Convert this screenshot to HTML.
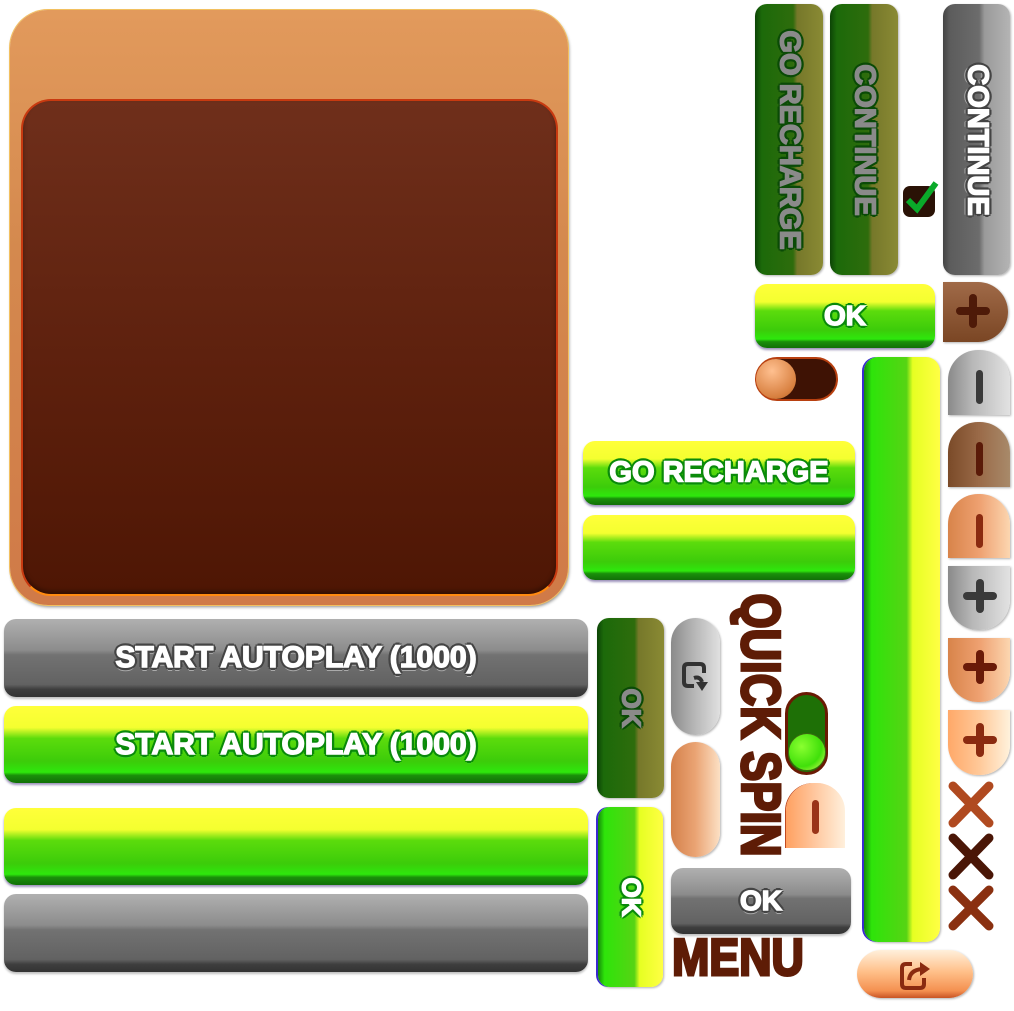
<!DOCTYPE html>
<html><head><meta charset="utf-8"><style>
*{margin:0;padding:0;box-sizing:border-box}
html,body{width:1014px;height:1011px;background:#fff;overflow:hidden;position:relative;font-family:"Liberation Sans",sans-serif;font-weight:bold}
.a{position:absolute}
.hg{background:linear-gradient(#ffff3a 0%,#f4ff30 28%,#5cdc0c 42%,#3ccc0a 72%,#2ee80c 86%,#1a900a 90%,#127008 100%);border-radius:12px;box-shadow:0 2px 2px rgba(60,40,120,.5)}
.hgr{background:linear-gradient(#b0b0b0 0%,#8c8c8c 40%,#727272 46%,#626262 84%,#3e3e3e 90%,#333 100%);border-radius:12px;box-shadow:0 2px 2px rgba(0,0,0,.25)}
.vd{background:linear-gradient(90deg,#0c4406 0%,#1c6a0a 10%,#2e6c0c 56%,#76782a 62%,#8a8a34 100%);border-radius:12px;box-shadow:1px 1px 2px rgba(0,0,0,.3)}
.vg{background:linear-gradient(90deg,#168a0a 0%,#2ee40a 10%,#56d414 56%,#e6ff22 64%,#ffff44 100%);border-radius:12px;box-shadow:-2px 0 0 #3a2ad0,1px 1px 2px rgba(0,0,0,.3)}
.vgr{background:linear-gradient(90deg,#444 0%,#5c5c5c 10%,#6c6c6c 54%,#9a9a9a 62%,#b4b4b4 100%);border-radius:12px;box-shadow:1px 1px 2px rgba(0,0,0,.3)}
.t{position:absolute;left:50%;top:50%;white-space:nowrap;color:#fff}
.go{-webkit-text-stroke:1.5px #fff;text-shadow:3px 0 #0a8a0a,-3px 0 #0a8a0a,0 3px #0a8a0a,0 -3px #0a8a0a,2px 2px #0a8a0a,-2px -2px #0a8a0a,2px -2px #0a8a0a,-2px 2px #0a8a0a,0 4px #3cd020}
.gro{-webkit-text-stroke:1.5px #fff;text-shadow:3px 0 #444,-3px 0 #444,0 3px #444,0 -3px #444,2px 2px #444,-2px -2px #444,2px -2px #444,-2px 2px #444,0 4px #aaa}
.dgo{color:#8a8a8a;-webkit-text-stroke:1.5px #8a8a8a;text-shadow:3px 0 #0a4a06,-3px 0 #0a4a06,0 3px #0a4a06,0 -3px #0a4a06,2px 2px #0a4a06,-2px -2px #0a4a06,2px -2px #0a4a06,-2px 2px #0a4a06}
.bar{position:absolute;background:#4a2a24;border-radius:4px}
</style></head><body>

<div class="a" style="left:10px;top:10px;width:558px;height:595px;border-radius:38px;background:linear-gradient(#e29a5c 0%,#d4894e 40%,#d07a48 100%);box-shadow:0 0 0 1px #f2c060,1px 2px 3px rgba(0,0,0,.45)"></div>
<div class="a" style="left:21px;top:99px;width:537px;height:497px;border-radius:30px;background:linear-gradient(#6f2f1b 0%,#5d200d 55%,#4e1604 100%);border:2px solid #c83a10;border-bottom-color:#ff8a10;box-shadow:inset 0 -3px 4px rgba(0,0,0,.35)"></div>

<div class="a vd" style="left:755px;top:4px;width:68px;height:271px"><div class="t dgo" style="font-size:29px;transform:translate(-50%,-50%) rotate(90deg)">GO RECHARGE</div></div>
<div class="a vd" style="left:830px;top:4px;width:68px;height:271px"><div class="t dgo" style="font-size:29px;transform:translate(-50%,-50%) rotate(90deg)">CONTINUE</div></div>
<div class="a vgr" style="left:943px;top:4px;width:67px;height:271px"><div class="t gro" style="font-size:29px;transform:translate(-50%,-50%) rotate(90deg)">CONTINUE</div></div>
<div class="a" style="left:903px;top:186px;width:32px;height:31px;background:#2a1206;border-radius:7px"></div>
<svg class="a" style="left:903px;top:178px" width="36" height="40"><path d="M5 22 L14 31 L33 5" stroke="#0aaa2a" stroke-width="6" fill="none"/></svg>

<div class="a hg" style="left:755px;top:284px;width:180px;height:64px"><div class="t go" style="font-size:28px;transform:translate(-50%,-50%)">OK</div></div>
<div class="a" style="left:943px;top:282px;width:65px;height:60px;border-radius:0 30px 30px 0;background:linear-gradient(#a06a48,#7a4624);box-shadow:1px 1px 2px rgba(0,0,0,.3)"></div>
<div class="bar" style="left:956px;top:307px;width:34px;height:8px;background:#4e1a08"></div>
<div class="bar" style="left:969px;top:294px;width:8px;height:34px;background:#4e1a08"></div>
<div class="a" style="left:755px;top:357px;width:83px;height:44px;border-radius:22px;background:#3e1204;border:2px solid #b84010"></div>
<div class="a" style="left:756px;top:359px;width:40px;height:40px;border-radius:50%;background:radial-gradient(circle at 40% 30%,#ffc090,#d88040 70%,#b06020)"></div>

<div class="a vg" style="left:864px;top:357px;width:76px;height:585px;border-radius:14px"></div>

<div class="a" style="left:948px;top:350px;width:62px;height:65px;border-radius:30px 30px 0 0;background:linear-gradient(90deg,#8a8a8a,#b8b8b8 40%,#e2e2e2);box-shadow:1px 1px 2px rgba(0,0,0,.3)"></div>
<div class="bar" style="left:976px;top:370px;width:7px;height:34px;background:#3a3a3a"></div>
<div class="a" style="left:948px;top:422px;width:62px;height:65px;border-radius:30px 30px 0 0;background:linear-gradient(90deg,#7a4a28,#9a6a48 50%,#a88a6a);box-shadow:1px 1px 2px rgba(0,0,0,.3)"></div>
<div class="bar" style="left:976px;top:442px;width:7px;height:34px;background:#5a1a08"></div>
<div class="a" style="left:948px;top:494px;width:62px;height:64px;border-radius:30px 30px 0 0;background:linear-gradient(90deg,#d8844a,#eea070 50%,#fcd6b0);box-shadow:1px 1px 2px rgba(0,0,0,.3)"></div>
<div class="bar" style="left:976px;top:514px;width:7px;height:34px;background:#8a2a10"></div>
<div class="a" style="left:948px;top:566px;width:62px;height:64px;border-radius:0 0 30px 30px;background:linear-gradient(90deg,#8a8a8a,#b8b8b8 40%,#e2e2e2);box-shadow:1px 1px 2px rgba(0,0,0,.3)"></div>
<div class="bar" style="left:963px;top:592px;width:34px;height:8px;background:#3a3a3a"></div>
<div class="bar" style="left:976px;top:579px;width:8px;height:34px;background:#3a3a3a"></div>
<div class="a" style="left:948px;top:638px;width:62px;height:64px;border-radius:0 0 30px 30px;background:linear-gradient(90deg,#d8844a,#eea070 50%,#fcd6b0);box-shadow:1px 1px 2px rgba(0,0,0,.3)"></div>
<div class="bar" style="left:963px;top:663px;width:34px;height:8px;background:#6a1a08"></div>
<div class="bar" style="left:976px;top:650px;width:8px;height:34px;background:#6a1a08"></div>
<div class="a" style="left:948px;top:710px;width:62px;height:65px;border-radius:0 0 30px 30px;background:linear-gradient(90deg,#ffa868,#ffc898 50%,#fff2dc);box-shadow:1px 1px 2px rgba(0,0,0,.3)"></div>
<div class="bar" style="left:963px;top:736px;width:34px;height:8px;background:#8a2a10"></div>
<div class="bar" style="left:976px;top:723px;width:8px;height:34px;background:#8a2a10"></div>
<svg class="a" style="left:946px;top:780px" width="52" height="154">
<g stroke-linecap="round" stroke-width="9" fill="none">
<path d="M7 6 L43 43 M43 6 L7 43" stroke="#b04a20"/>
<path d="M7 58 L43 95 M43 58 L7 95" stroke="#4a1606"/>
<path d="M7 110 L43 146 M43 110 L7 146" stroke="#8a3010"/>
</g></svg>

<div class="a hg" style="left:583px;top:441px;width:272px;height:64px"><div class="t go" style="font-size:29px;transform:translate(-50%,-50%)">GO RECHARGE</div></div>
<div class="a hg" style="left:583px;top:515px;width:272px;height:65px"></div>

<div class="a hgr" style="left:4px;top:619px;width:584px;height:78px"><div class="t gro" style="font-size:30px;transform:translate(-50%,-50%)">START AUTOPLAY (1000)</div></div>
<div class="a hg" style="left:4px;top:706px;width:584px;height:77px"><div class="t go" style="font-size:30px;transform:translate(-50%,-50%)">START AUTOPLAY (1000)</div></div>
<div class="a hg" style="left:4px;top:808px;width:584px;height:77px"></div>
<div class="a hgr" style="left:4px;top:894px;width:584px;height:78px"></div>

<div class="a vd" style="left:597px;top:618px;width:67px;height:180px"><div class="t dgo" style="font-size:26px;transform:translate(-50%,-50%) rotate(90deg)">OK</div></div>
<div class="a vg" style="left:598px;top:807px;width:65px;height:180px"><div class="t go" style="font-size:26px;transform:translate(-50%,-50%) rotate(90deg)">OK</div></div>

<div class="a" style="left:671px;top:618px;width:49px;height:117px;border-radius:25px;background:linear-gradient(90deg,#8a8a8a,#b4b4b4 45%,#e0e0e0);box-shadow:1px 1px 2px rgba(0,0,0,.3)"></div>
<svg class="a" style="left:680px;top:660px" width="32" height="36"><path d="M14 26 H8 Q4 26 4 22 V8 Q4 4 8 4 H20 Q24 4 24 8 V13" stroke="#333" stroke-width="4" fill="none"/><path d="M14 18 Q20 16 22 22" stroke="#333" stroke-width="4" fill="none"/><path d="M16 22 L28 22 L22 31 Z" fill="#333"/></svg>
<div class="a" style="left:671px;top:742px;width:49px;height:115px;border-radius:25px;background:linear-gradient(90deg,#d4804a,#eaa474 50%,#fce0c4);box-shadow:1px 1px 2px rgba(0,0,0,.3)"></div>

<div class="t" style="left:761px;top:725px;color:#5e1c06;-webkit-text-stroke:3px #5e1c06;font-size:55px;transform:translate(-50%,-50%) rotate(90deg) scaleX(0.82)">QUICK SPIN</div>
<div class="a" style="left:785px;top:692px;width:43px;height:83px;border-radius:22px;background:#1e7006;border:3px solid #6a1a04"></div>
<div class="a" style="left:788px;top:733px;width:38px;height:38px;border-radius:50%;background:radial-gradient(circle at 35% 35%,#8aff30,#40e00a 60%,#e8ff60);border:1px solid #3a6a10"></div>
<div class="a" style="left:786px;top:783px;width:59px;height:65px;border-radius:28px 28px 0 0;background:linear-gradient(90deg,#ffa060,#ffc8a0 50%,#fff0dc);box-shadow:-1px 0 0 #c04a20"></div>
<div class="bar" style="left:812px;top:800px;width:7px;height:34px;background:#9a3418"></div>

<div class="a hgr" style="left:671px;top:868px;width:180px;height:66px"><div class="t gro" style="font-size:28px;transform:translate(-50%,-50%)">OK</div></div>
<div class="t" style="left:738px;top:958px;color:#5e1c06;-webkit-text-stroke:3px #5e1c06;font-size:52px;transform:translate(-50%,-50%) scaleX(0.86)">MENU</div>

<div class="a" style="left:857px;top:950px;width:116px;height:48px;border-radius:24px;background:linear-gradient(#fff0dc 0%,#ffc08a 45%,#f49050 85%,#c85424 100%);box-shadow:1px 1px 2px rgba(0,0,0,.3)"></div>
<svg class="a" style="left:898px;top:956px" width="36" height="36"><path d="M14 8 H8 Q4 8 4 12 V28 Q4 32 8 32 H22 Q26 32 26 28 V22" stroke="#8a2a10" stroke-width="4" fill="none"/><path d="M11 24 Q12 14 24 13" stroke="#8a2a10" stroke-width="4" fill="none"/><path d="M22 6 L32 13 L22 20 Z" fill="#8a2a10"/></svg>

</body></html>
